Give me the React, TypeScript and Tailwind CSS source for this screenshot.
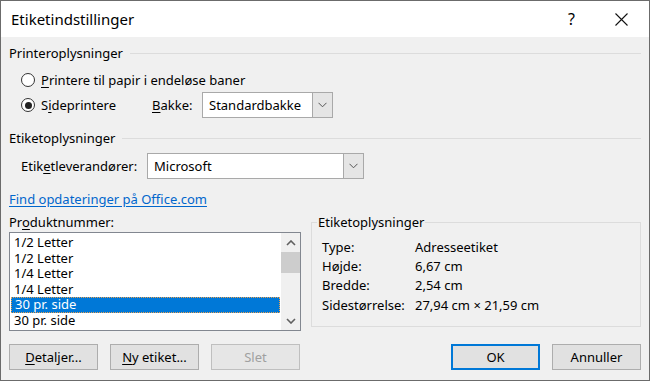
import React from 'react';

const font = { fontFamily: '"Noto Sans", "Open Sans", Arial, sans-serif' };

function U({ children }: { children: React.ReactNode }) {
  return <span className="underline underline-offset-2">{children}</span>;
}

function Radio({ checked }: { checked?: boolean }) {
  return (
    <span className="w-[14px] h-[14px] rounded-full border border-[#333] bg-white flex items-center justify-center shrink-0">
      {checked && <span className="w-[7px] h-[7px] rounded-full bg-[#222]" />}
    </span>
  );
}

function ChevronDown({ className = '' }: { className?: string }) {
  return (
    <svg width="9" height="6" viewBox="0 0 9 6" className={className}>
      <path d="M0.5 0.8 L4.5 4.8 L8.5 0.8" fill="none" stroke="#555" strokeWidth="1" />
    </svg>
  );
}

function Combo({ value, width }: { value: string; width: string }) {
  return (
    <div className={`${width} h-[26px] border border-[#a9a9a9] bg-white flex`}>
      <div className="flex-1 flex items-center pl-[6px]">{value}</div>
      <div className="w-[20px] bg-[#e5e5e5] border-l border-[#a9a9a9] flex items-center justify-center">
        <ChevronDown />
      </div>
    </div>
  );
}

function GroupHeading({ title }: { title: string }) {
  return (
    <div className="flex items-center h-[18px] gap-[7px]">
      <span>{title}</span>
      <div className="flex-1 h-px bg-[#dcdcdc]" />
    </div>
  );
}

function Button({
  children,
  disabled,
  primary,
}: {
  children: React.ReactNode;
  disabled?: boolean;
  primary?: boolean;
}) {
  return (
    <button
      className={`w-[89px] h-[26px] flex items-center justify-center ${
        primary
          ? 'border-2 border-[#0078d7] bg-[#e1e1e1]'
          : disabled
          ? 'border border-[#bfbfbf] bg-[#e6e6e6] text-[#a0a0a0]'
          : 'border border-[#adadad] bg-[#e1e1e1]'
      }`}
    >
      {children}
    </button>
  );
}

const products = ['1/2 Letter', '1/2 Letter', '1/4 Letter', '1/4 Letter', '30 pr. side', '30 pr. side'];

const info: [string, string][] = [
  ['Type:', 'Adresseetiket'],
  ['Højde:', '6,67 cm'],
  ['Bredde:', '2,54 cm'],
  ['Sidestørrelse:', '27,94 cm × 21,59 cm'],
];

export default function App() {
  return (
    <div
      style={font}
      className="w-[650px] h-[381px] border border-[#6b6b6b] bg-[#f0f0f0] flex flex-col text-[13px] text-black leading-[18px]"
    >
      <div className="h-[36px] bg-white flex items-center pl-[10px] pr-[21px] shrink-0">
        <span className="text-[15px] flex-1">Etiketindstillinger</span>
        <span className="text-[16px] mr-[40px]">?</span>
        <svg width="13" height="13" viewBox="0 0 13 13">
          <path d="M0.5 0.5 L12.5 12.5 M12.5 0.5 L0.5 12.5" stroke="#111" strokeWidth="1.1" />
        </svg>
      </div>

      <div className="flex flex-col pl-[8px] pr-[8px] pt-[7px]">
        <GroupHeading title="Printeroplysninger" />

        <div className="flex items-center h-[18px] mt-[9px] pl-[12px] gap-[6px]">
          <Radio />
          <span>
            <U>P</U>rintere til papir i endeløse baner
          </span>
        </div>

        <div className="flex items-center h-[26px] mt-[3px] pl-[12px]">
          <Radio checked />
          <span className="ml-[6px] w-[111px]">
            S<U>i</U>deprintere
          </span>
          <span className="w-[50px]">
            <U>B</U>akke:
          </span>
          <Combo value="Standardbakke" width="w-[131px]" />
        </div>

        <div className="mt-[11px]">
          <GroupHeading title="Etiketoplysninger" />
        </div>

        <div className="flex items-center h-[26px] mt-[6px] pl-[12px]">
          <span className="w-[126px]">
            Etik<U>e</U>tleverandører:
          </span>
          <Combo value="Microsoft" width="w-[217px]" />
        </div>

        <div className="mt-[11px] h-[18px]">
          <span className="text-[#0066cc] underline underline-offset-2">Find opdateringer på Office.com</span>
        </div>

        <div className="flex mt-[5px] gap-[10px]">
          <div className="flex flex-col w-[292px]">
            <span className="h-[18px]">
              Pr<U>o</U>duktnummer:
            </span>
            <div className="mt-[1px] h-[99px] border border-[#828790] bg-white flex">
              <div className="flex-1 flex flex-col pt-[2px] pl-[1px] pr-[1px]">
                {products.map((p, i) => (
                  <div
                    key={i}
                    className={`h-[15.6px] leading-[15.6px] pl-[3px] flex items-center ${
                      i === 4 ? 'bg-[#0078d7] text-white border border-dotted border-[#e8a050] pl-[2px]' : ''
                    }`}
                  >
                    {p}
                  </div>
                ))}
              </div>
              <div className="w-[19px] bg-[#f0f0f0] flex flex-col items-center">
                <div className="h-[19px] flex items-center justify-center">
                  <svg width="10" height="6" viewBox="0 0 10 6">
                    <path d="M1 5 L5 1 L9 5" fill="none" stroke="#606060" strokeWidth="1.6" />
                  </svg>
                </div>
                <div className="w-full h-[21px] bg-[#cdcdcd]" />
                <div className="flex-1" />
                <div className="h-[19px] flex items-center justify-center">
                  <svg width="10" height="6" viewBox="0 0 10 6">
                    <path d="M1 1 L5 5 L9 1" fill="none" stroke="#606060" strokeWidth="1.6" />
                  </svg>
                </div>
              </div>
            </div>
          </div>

          <fieldset className="flex-1 h-[114px] border border-[#dcdcdc] px-[10px]">
            <legend className="px-[1px] -ml-[5px] leading-[18px]">Etiketoplysninger</legend>
            <div className="flex flex-col mt-[6px]">
              {info.map(([k, v]) => (
                <div key={k} className="flex h-[19.3px] items-center">
                  <span className="w-[93px]">{k}</span>
                  <span>{v}</span>
                </div>
              ))}
            </div>
          </fieldset>
        </div>

        <div className="flex mt-[13px] gap-[12px]">
          <Button>
            <U>D</U>etaljer...
          </Button>
          <Button>
            <U>N</U>y etiket...
          </Button>
          <Button disabled>Slet</Button>
          <div className="flex-1" />
          <Button primary>OK</Button>
          <Button>Annuller</Button>
        </div>
      </div>
    </div>
  );
}
